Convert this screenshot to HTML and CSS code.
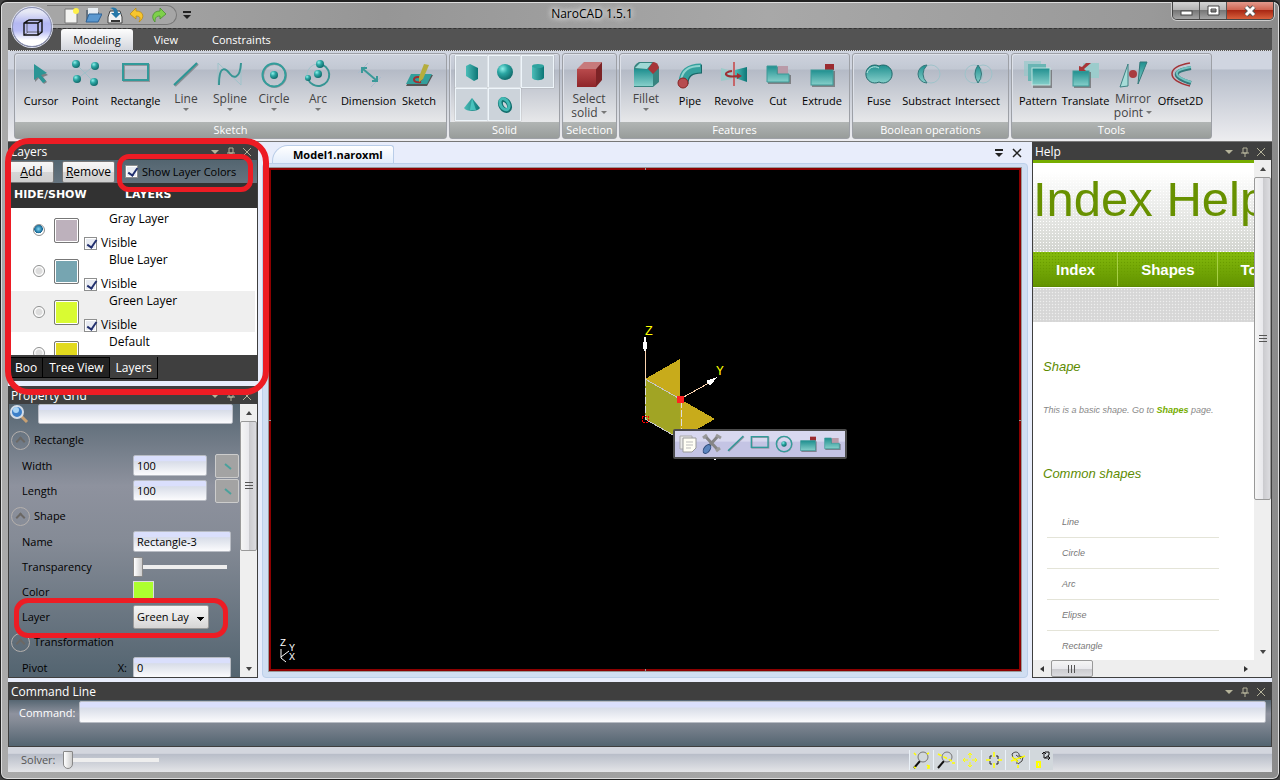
FILE: index.html
```html
<!DOCTYPE html>
<html lang="en">

<head>
    <meta charset="UTF-8">
    <meta name="viewport" content="width=device-width, initial-scale=1.0">
    <title>NaroCAD 1.5.1</title>
    <link rel="stylesheet" href="styles.css">
</head>

<body>
    <!-- shared icons -->
    <svg class="defs" width="0" height="0" aria-hidden="true">
        <defs>
            <linearGradient id="teal" x1="0" y1="0" x2="0" y2="1">
                <stop offset="0" stop-color="#1f8f8f" />
                <stop offset="1" stop-color="#86cfca" />
            </linearGradient>
            <linearGradient id="tealSide" x1="0" y1="0" x2="1" y2="0">
                <stop offset="0" stop-color="#4bbdb8" />
                <stop offset="1" stop-color="#0c7676" />
            </linearGradient>
            <radialGradient id="ball" cx="0.35" cy="0.3" r="0.8">
                <stop offset="0" stop-color="#8ff0ea" />
                <stop offset="0.4" stop-color="#2ba6a3" />
                <stop offset="1" stop-color="#0b5f60" />
            </radialGradient>
            <linearGradient id="red" x1="0" y1="0" x2="0" y2="1">
                <stop offset="0" stop-color="#b94a4c" />
                <stop offset="1" stop-color="#8e2529" />
            </linearGradient>
        </defs>
        <symbol id="i-line" viewBox="0 0 30 30"><path d="M4 26 27 4" stroke="#555" stroke-opacity=".5" stroke-width="2" /><path d="M3 25 26 3" stroke="#2b9695" stroke-width="2" /></symbol>
        <symbol id="i-rect" viewBox="0 0 30 30"><rect x="3" y="5" width="25" height="16" fill="none" stroke="#666" stroke-opacity=".5" stroke-width="2" /><rect x="2" y="4" width="25" height="16" fill="none" stroke="#329a9a" stroke-width="2" /></symbol>
        <symbol id="i-circle" viewBox="0 0 30 30"><circle cx="15.500" cy="15.500" r="11.500" fill="none" stroke="#666" stroke-opacity=".5" stroke-width="2" /><circle cx="15" cy="15" r="11.500" fill="none" stroke="#339d9b" stroke-width="2" /><circle cx="15" cy="15" r="4" fill="url(#ball)" /></symbol>
        <symbol id="i-extrude" viewBox="0 0 30 30"><path d="M5 11H28V27H5z" fill="#555" opacity=".6" /><rect x="18" y="4" width="9" height="6" fill="#9b2b30" /><rect x="4" y="10" width="22" height="15" fill="url(#teal)" stroke="#3c9a98" /></symbol>
        <symbol id="i-cut" viewBox="0 0 30 30"><path d="M5 7H15V15H28V24H5z" fill="#555" opacity=".6" /><rect x="15" y="6" width="10" height="8" fill="#b99aa8" /><path d="M4 6H14V14H26V22H4z" fill="url(#teal)" stroke="#3c9a98" /></symbol>
        <symbol id="i-menu" viewBox="0 0 10 10"><path d="M1 3H9L5 7z" fill="#b5b39a" /></symbol>
        <symbol id="i-pin" viewBox="0 0 10 10"><path d="M3 1H7V6H3zM1 6H9M5 6V10" fill="none" stroke="#b5b39a" /></symbol>
        <symbol id="i-close" viewBox="0 0 10 10"><path d="M1 1 9 9M9 1 1 9" fill="none" stroke="#b5b39a" /></symbol>
    </svg>

    <div class="window">
        <header class="titlebar">
            <button class="orb" aria-label="Application menu">
                <svg width="40" height="40" viewBox="0 0 40 40"><path d="M14 12V24H29M11 27 15 24" fill="none" stroke="#667" /><path d="M11 15 16 12H29V24L25 27H11zM11 15H25V27M25 15 29 12" fill="none" stroke="#111" stroke-width="1.400" /></svg>
            </button>
            <div class="quick">
                <button aria-label="New"><svg width="18" height="18"><path d="M3 3H15V17H3z" fill="#f3f3f1" stroke="#777" /><circle cx="14" cy="5" r="3" fill="#fff14a" /></svg></button>
                <button aria-label="Open"><svg width="18" height="18"><path d="M2 4H8L9 6H15V15H2z" fill="#66727e" /><path d="M4 2H14V9H4z" fill="#e7edf2" /><path d="M5 8H18L14 16H2z" fill="#5b98cf" stroke="#2e6296" /></svg></button>
                <button aria-label="Save"><svg width="18" height="18"><path d="M2 11 4 5H14L16 11V17H2z" fill="#f2f2f2" stroke="#444" /><path d="M5 15H14" stroke="#333" stroke-width="2" /><path d="M4 2C10 0 12 4 12 7H15L10 12 5 7H8C8 4 7 3 4 2z" fill="#2778a8" /></svg></button>
                <button aria-label="Undo"><svg width="18" height="18"><path d="M2 8 8 2V5C16 5 17 12 11 16 13 12 12 10 8 10V13z" fill="#f7c52d" stroke="#b8860b" stroke-width=".7" /></svg></button>
                <button aria-label="Redo"><svg width="18" height="18"><path d="M16 8 10 2V5C2 5 1 12 5 16 5 12 6 10 10 10V13z" fill="#7ed04a" stroke="#3f8a26" stroke-width=".7" /></svg></button>
            </div>
            <button class="quick-more" aria-label="Customize"><svg width="10" height="10"><path d="M1 2H9" stroke="#222" stroke-width="2" /><path d="M1 5H9L5 9z" fill="#222" /></svg></button>
            <h1>NaroCAD 1.5.1</h1>
            <div class="win-buttons">
                <button aria-label="Minimize"><svg width="14" height="12"><rect x="2" y="6" width="11" height="4" fill="#fff" stroke="#444" /></svg></button>
                <button aria-label="Maximize"><svg width="14" height="12"><path d="M2 1H13V10H2zM5 4V7H10V4z" fill="#fff" fill-rule="evenodd" stroke="#444" /></svg></button>
                <button class="win-close" aria-label="Close"><svg width="14" height="12"><path d="M3 2 11 10M11 2 3 10" stroke="#555" stroke-width="5" /><path d="M3 2 11 10M11 2 3 10" stroke="#fff" stroke-width="3" /></svg></button>
            </div>
        </header>

        <div class="app">
            <nav class="tabs">
                <button class="tab active">Modeling</button>
                <button class="tab">View</button>
                <button class="tab">Constraints</button>
            </nav>

            <div class="ribbon">
                <section class="group">
                    <div class="tools">
                        <button class="tool"><svg width="30" height="30"><path d="M9 6V22L13 18 18 24 21 22 17 17 22 15z" fill="#555" opacity=".6" /><path d="M8 4V20L12 17 17 23 20 21 15 15 21 13z" fill="#2b9595" /></svg>Cursor</button>
                        <button class="tool"><svg width="30" height="30"><path d="M6 4 24 22M24 6 7 19" stroke="#9fbfc8" /><circle cx="6" cy="4" r="4" fill="url(#ball)" /><circle cx="25" cy="6" r="4" fill="url(#ball)" /><circle cx="7" cy="19" r="4" fill="url(#ball)" /><circle cx="24" cy="22" r="4" fill="url(#ball)" /></svg>Point</button>
                        <button class="tool tool-l"><svg width="30" height="30"><use href="#i-rect" /></svg>Rectangle</button>
                        <button class="tool drop"><svg width="30" height="30"><use href="#i-line" /></svg>Line</button>
                        <button class="tool drop"><svg width="30" height="30"><path d="M3 25V3L26 25V3" fill="none" stroke="#9fc3ca" /><path d="M4 25C4 2 12 10 15 14S25 20 26 3" fill="none" stroke="#379594" stroke-width="2" /></svg>Spline</button>
                        <button class="tool drop"><svg width="30" height="30"><use href="#i-circle" /></svg>Circle</button>
                        <button class="tool drop"><svg width="30" height="30"><circle cx="15" cy="15" r="11" fill="none" stroke="#9fc3ca" /><path d="M16 4A11 11 0 1 1 5 19" fill="none" stroke="#379594" stroke-width="2" /><circle cx="15" cy="14" r="4" fill="url(#ball)" /><circle cx="17" cy="4" r="4" fill="url(#ball)" /><circle cx="5" cy="18" r="3" fill="url(#ball)" /></svg>Arc</button>
                        <button class="tool tool-l"><svg width="30" height="30"><path d="M4 13 14 3M17 27 27 17" stroke="#abc" /><path d="M9 9 22 20M8 13V8H13M23 16V21H18" fill="none" stroke="#3a9999" stroke-width="2" /></svg>Dimension</button>
                        <button class="tool"><svg width="30" height="30"><path d="M8 15H29L23 26H2z" fill="#555" /><path d="M7 14H28L23 24H2z" fill="#339f9c" /><path d="M17 22C8 24 8 16 15 17L18 20" fill="none" stroke="#a22e32" stroke-width="2" /><path d="M20 4 25 5 19 19 15 22 15 17z" fill="#b5ad3d" /></svg>Sketch</button>
                    </div>
                    <h2>Sketch</h2>
                </section>
                <section class="group">
                    <div class="solids">
                        <button aria-label="Box"><svg width="24" height="24"><path d="M6 6 10 4 18 8V19L14 21 6 16z" fill="url(#tealSide)" /></svg></button>
                        <button aria-label="Sphere"><svg width="24" height="24"><circle cx="12" cy="12" r="8" fill="url(#ball)" /></svg></button>
                        <button aria-label="Cylinder"><svg width="24" height="24"><path d="M6 6V18C8 21 16 21 18 18V6z" fill="url(#tealSide)" /><ellipse cx="12" cy="6" rx="6" ry="2" fill="#2fa39f" /></svg></button>
                        <button aria-label="Cone"><svg width="24" height="24"><path d="M12 5 20 15C18 19 6 19 4 15z" fill="url(#tealSide)" /><path d="M12 5 16 17H10z" fill="#5ee0d8" opacity=".6" /></svg></button>
                        <button aria-label="Torus"><svg width="24" height="24"><ellipse cx="12" cy="12" rx="4" ry="6" fill="none" stroke="#14706f" stroke-width="5" transform="rotate(-30 12 12)" /><ellipse cx="12" cy="11" rx="4" ry="6" fill="none" stroke="#43b9b4" stroke-width="3" transform="rotate(-30 12 12)" /></svg></button>
                    </div>
                    <h2>Solid</h2>
                </section>
                <section class="group">
                    <div class="tools">
                        <button class="tool two"><svg width="30" height="30"><path d="M3 9 10 2H28L22 9z" fill="#c77a7b" /><path d="M22 9 28 2V20L22 27z" fill="#7c2326" /><path d="M3 9H22V27H3z" fill="url(#red)" /></svg><span>Select<br>solid <i class="caret"></i></span></button>
                    </div>
                    <h2>Selection</h2>
                </section>
                <section class="group">
                    <div class="tools">
                        <button class="tool drop"><svg width="30" height="30"><path d="M3 8Q3 5 8 2H22Q28 4 28 9V22L22 27H3z" fill="#37847f" /><path d="M3 9H17Q22 12 22 15V26H3z" fill="url(#teal)" /><path d="M4 8 9 3H21L16 9z" fill="#9fd9d5" /><path d="M17 9 22 2Q27 2 28 8L22 14z" fill="#a73539" /></svg>Fillet</button>
                        <button class="tool"><svg width="30" height="30"><path d="M9 24Q9 9 27 9" fill="none" stroke="#1b6667" stroke-width="9" /><path d="M8 23Q8 8 26 8" fill="none" stroke="#35a09d" stroke-width="9" /><path d="M6 20Q8 6 25 6" fill="none" stroke="#8fd3cf" stroke-width="2" /><circle cx="8" cy="23" r="5" fill="#b74c50" stroke="#822" /></svg>Pipe</button>
                        <button class="tool"><svg width="30" height="30"><path d="M2 8 13 11V19L2 21z" fill="#9bcac9" /><path d="M16 10 28 7V22L16 18z" fill="url(#tealSide)" /><path d="M15 2V26" stroke="#c66569" stroke-width="2" /><path d="M13 11C4 12 4 18 20 16" fill="none" stroke="#9e3033" stroke-width="2" /><path d="M18 13 23 16 18 19z" fill="#9e3033" /></svg>Revolve</button>
                        <button class="tool"><svg width="30" height="30"><use href="#i-cut" /></svg>Cut</button>
                        <button class="tool"><svg width="30" height="30"><use href="#i-extrude" /></svg>Extrude</button>
                    </div>
                    <h2>Features</h2>
                </section>
                <section class="group">
                    <div class="tools">
                        <button class="tool"><svg width="30" height="30"><path d="M15 6A9 9 0 1 0 15 22 9 9 0 1 0 15 6z" fill="url(#teal)" stroke="#22686a" /><path d="M15 8A8 8 0 0 0 3 13" fill="none" stroke="#bfe8e4" /></svg>Fuse</button>
                        <button class="tool tool-m"><svg width="30" height="30"><circle cx="19" cy="14" r="9" fill="none" stroke="#9fc3ca" /><path d="M15 5A9 9 0 1 0 15 23Q7 14 15 5z" fill="url(#teal)" stroke="#35777a" /></svg>Substract</button>
                        <button class="tool tool-m"><svg width="30" height="30"><circle cx="11" cy="14" r="9" fill="none" stroke="#9fc3ca" /><circle cx="20" cy="14" r="9" fill="none" stroke="#9fc3ca" /><path d="M15 5Q22 14 15 23 9 14 15 5z" fill="url(#teal)" stroke="#35777a" /></svg>Intersect</button>
                    </div>
                    <h2>Boolean operations</h2>
                </section>
                <section class="group">
                    <div class="tools">
                        <button class="tool"><svg width="30" height="30"><rect x="1" y="1" width="17" height="15" fill="#8fc8c8" opacity=".6" /><rect x="5" y="4" width="18" height="17" fill="#69b5b4" /><rect x="10" y="10" width="19" height="18" fill="#555" opacity=".6" /><rect x="9" y="8" width="18" height="17" fill="url(#teal)" stroke="#bfe4e0" /></svg>Pattern</button>
                        <button class="tool tool-m"><svg width="30" height="30"><rect x="12" y="3" width="16" height="15" fill="#9ccccc" /><rect x="3" y="12" width="17" height="16" fill="#555" opacity=".6" /><rect x="2" y="11" width="16" height="15" fill="url(#teal)" stroke="#3c9a98" /><path d="M20 3H15L11 7 8 6V11H15L13 9z" fill="#a83639" /></svg>Translate</button>
                        <button class="tool two"><svg width="30" height="30"><path d="M2 27 10 4V26z" fill="#a7dcd8" stroke="#3e8283" /><path d="M20 24 29 2H22z" fill="url(#teal)" stroke="#33797a" /><circle cx="15" cy="14" r="4" fill="#a93c40" /></svg><span>Mirror<br>point <i class="caret"></i></span></button>
                        <button class="tool tool-m"><svg width="30" height="30"><path d="M24 3C0 7 0 20 24 26" fill="none" stroke="#a33438" stroke-width="1.500" /><path d="M25 8C6 11 6 17 25 23" fill="none" stroke="#33787b" stroke-width="4" /><path d="M25 7C6 10 6 16 25 22" fill="none" stroke="#72c4c1" stroke-width="2" /></svg>Offset2D</button>
                    </div>
                    <h2>Tools</h2>
                </section>
            </div>

            <main class="workspace">
                <aside class="left">
                    <section class="panel layers">
                        <header class="panel-title"><h2>Layers</h2>
                            <button aria-label="Menu"><svg width="10" height="10"><use href="#i-menu" /></svg></button>
                            <button aria-label="Pin"><svg width="10" height="10"><use href="#i-pin" /></svg></button>
                            <button aria-label="Close"><svg width="10" height="10"><use href="#i-close" /></svg></button>
                        </header>
                        <div class="layer-bar">
                            <button class="btn"><u>A</u>dd</button>
                            <button class="btn btn-wide"><u>R</u>emove</button>
                            <label class="show-colors mark mark-colors"><input type="checkbox" checked>Show Layer Colors</label>
                        </div>
                        <div class="layer-head"><b>HIDE/SHOW</b><b>LAYERS</b></div>
                        <ul class="layer-list">
                            <li>
                                <input type="radio" name="layer" aria-label="Gray Layer" checked>
                                <button class="swatch gray" aria-label="Gray Layer color"></button>
                                <div><p>Gray Layer</p><label><input type="checkbox" checked>Visible</label></div>
                            </li>
                            <li>
                                <input type="radio" name="layer" aria-label="Blue Layer">
                                <button class="swatch blue" aria-label="Blue Layer color"></button>
                                <div><p>Blue Layer</p><label><input type="checkbox" checked>Visible</label></div>
                            </li>
                            <li class="current">
                                <input type="radio" name="layer" aria-label="Green Layer">
                                <button class="swatch green" aria-label="Green Layer color"></button>
                                <div><p>Green Layer</p><label><input type="checkbox" checked>Visible</label></div>
                            </li>
                            <li>
                                <input type="radio" name="layer" aria-label="Default">
                                <button class="swatch yellow" aria-label="Default color"></button>
                                <div><p>Default</p></div>
                            </li>
                        </ul>
                        <div class="dock-tabs">
                            <button>Boo</button>
                            <button>Tree View</button>
                            <button class="active">Layers</button>
                        </div>
                    </section>

                    <section class="panel props">
                        <header class="panel-title"><h2>Property Grid</h2>
                            <button aria-label="Menu"><svg width="10" height="10"><use href="#i-menu" /></svg></button>
                            <button aria-label="Pin"><svg width="10" height="10"><use href="#i-pin" /></svg></button>
                            <button aria-label="Close"><svg width="10" height="10"><use href="#i-close" /></svg></button>
                        </header>
                        <div class="props-body">
                            <form class="grid">
                                <div class="search">
                                    <svg width="22" height="20"><path d="M12 12 18 18" stroke="#c9a173" stroke-width="3" /><circle cx="8" cy="8" r="6" fill="#3b7fc9" stroke="#d4dde8" stroke-width="2" /><circle cx="7" cy="6" r="3" fill="#a9d4f5" /></svg>
                                    <input type="text" class="field" aria-label="Search">
                                </div>
                                <div class="section"><button type="button" class="fold" aria-label="Collapse"></button>Rectangle</div>
                                <div class="row"><label for="width">Width</label><input id="width" class="field short" type="text" value="100">
                                    <button type="button" class="pick" aria-label="Pick width"><svg width="20" height="20"><path d="M9 8 15 13" stroke="#4aa19c" stroke-width="2" /></svg></button></div>
                                <div class="row"><label for="length">Length</label><input id="length" class="field short" type="text" value="100">
                                    <button type="button" class="pick" aria-label="Pick length"><svg width="20" height="20"><path d="M9 8 15 13" stroke="#4aa19c" stroke-width="2" /></svg></button></div>
                                <div class="section"><button type="button" class="fold" aria-label="Collapse"></button>Shape</div>
                                <div class="row"><label for="name">Name</label><input id="name" class="field" type="text" value="Rectangle-3"></div>
                                <div class="row"><label for="transparency">Transparency</label><input id="transparency" type="range" value="0"></div>
                                <div class="row"><label for="color">Color</label><button type="button" id="color" class="color"></button></div>
                                <div class="row mark mark-layer"><label for="layer">Layer</label>
                                    <select id="layer"><option>Green Lay</option></select></div>
                                <div class="section"><button type="button" class="fold" aria-label="Collapse"></button>Transformation</div>
                                <div class="row"><label for="pivot">Pivot <span>X:</span></label><input id="pivot" class="field" type="text" value="0"></div>
                            </form>
                            <div class="vbar"><button class="up" aria-label="Scroll up"></button><div class="thumb short-thumb"></div><button class="down" aria-label="Scroll down"></button></div>
                        </div>
                    </section>
                </aside>

                <section class="document">
                    <div class="doc-tabs">
                        <button class="doc-tab">Model1.naroxml</button>
                        <button class="doc-btn" aria-label="Documents"><svg width="10" height="10"><path d="M1 2H9" stroke="#222" stroke-width="2" /><path d="M1 5H9L5 9z" fill="#222" /></svg></button>
                        <button class="doc-btn" aria-label="Close document"><svg width="10" height="10"><path d="M1 1 9 9M9 1 1 9" stroke="#222" stroke-width="1.500" /></svg></button>
                    </div>
                    <div class="doc-frame">
                        <div class="canvas">
                            <svg class="scene" width="160" height="200" viewBox="0 0 160 200" shape-rendering="crispEdges">
                                <path d="M40 60 75 40V80zM75 80 110 100 75 120z" fill="#c8ab1b" />
                                <path d="M40 60 75 80V120L40 100z" fill="#a1a424" />
                                <path d="M40 60 75 80M40 100 75 120" stroke="#c8c8c8" />
                                <path d="M40 60V100M76 82V120" stroke="#ddd" stroke-dasharray="7 2" />
                                <path d="M40 60V30M75 80 104 64" stroke="#fbd3ae" />
                                <path d="M40 18 42 28 40 32 38 28zM111 59 105 66 102 62z" fill="#fff" stroke="#fff" />
                                <path d="M37 97h6v6h-6z" fill="none" stroke="#f00" stroke-dasharray="2 1" />
                                <path d="M72 77h7v7h-7z" fill="#f22" />
                                <path d="M107 139 111 141" stroke="#fff" />
                                <text x="40" y="16">Z</text>
                                <text x="111" y="56">Y</text>
                            </svg>
                            <svg class="axes" width="30" height="30" viewBox="0 0 30 30">
                                <path d="M4 12V21L9 25M4 20 12 14" fill="none" stroke="#fff" />
                                <text x="3" y="9">Z</text><text x="12" y="14">Y</text><text x="12" y="23">X</text>
                            </svg>
                            <i class="tick top"></i><i class="tick bottom"></i><i class="tick left-tick"></i><i class="tick right-tick"></i>
                            <div class="float-bar">
                                <button aria-label="Copy"><svg width="22" height="22"><path d="M3 3H15V16H3z" fill="#e8e8e8" stroke="#aaa" /><path d="M6 5H19V15L15 19H6z" fill="#fffef4" stroke="#999" /><path d="M9 9H16M9 12H16M9 15H14" stroke="#bbb" /></svg></button>
                                <button aria-label="Settings"><svg width="22" height="22"><path d="M4 3 17 17M17 3 8 13" stroke="#858585" stroke-width="3" /><path d="M2 5 6 2M15 2 20 5M15 18 19 15" stroke="#999" stroke-width="3" /><ellipse cx="6" cy="16" rx="3" ry="5" fill="#5b84bd" stroke="#2c4a7a" transform="rotate(35 6 16)" /></svg></button>
                                <button aria-label="Line"><svg width="20" height="20"><use href="#i-line" /></svg></button>
                                <button aria-label="Rectangle"><svg width="20" height="20"><use href="#i-rect" /></svg></button>
                                <button aria-label="Circle"><svg width="20" height="20"><use href="#i-circle" /></svg></button>
                                <button aria-label="Extrude"><svg width="20" height="20"><use href="#i-extrude" /></svg></button>
                                <button aria-label="Cut"><svg width="20" height="20"><use href="#i-cut" /></svg></button>
                            </div>
                        </div>
                    </div>
                </section>

                <aside class="panel help">
                    <header class="panel-title"><h2>Help</h2>
                        <button aria-label="Menu"><svg width="10" height="10"><use href="#i-menu" /></svg></button>
                        <button aria-label="Pin"><svg width="10" height="10"><use href="#i-pin" /></svg></button>
                        <button aria-label="Close"><svg width="10" height="10"><use href="#i-close" /></svg></button>
                    </header>
                    <div class="help-body">
                        <article class="page">
                            <h1>Index Help</h1>
                            <nav><a href="#">Index</a><a href="#">Shapes</a><a href="#">Tools</a></nav>
                            <div class="band"></div>
                            <h3>Shape</h3>
                            <p>This is a basic shape. Go to <a href="#">Shapes</a> page.</p>
                            <h3>Common shapes</h3>
                            <ul><li>Line</li><li>Circle</li><li>Arc</li><li>Elipse</li><li>Rectangle</li></ul>
                        </article>
                        <div class="vbar"><button class="up" aria-label="Scroll up"></button><div class="thumb"></div><button class="down" aria-label="Scroll down"></button></div>
                        <div class="hbar"><button class="prev" aria-label="Scroll left"></button><div class="thumb"></div><button class="next" aria-label="Scroll right"></button></div>
                    </div>
                </aside>
            </main>

            <section class="panel command">
                <header class="panel-title"><h2>Command Line</h2>
                    <button aria-label="Menu"><svg width="10" height="10"><use href="#i-menu" /></svg></button>
                    <button aria-label="Pin"><svg width="10" height="10"><use href="#i-pin" /></svg></button>
                    <button aria-label="Close"><svg width="10" height="10"><use href="#i-close" /></svg></button>
                </header>
                <div class="command-body"><label for="command">Command:</label><input id="command" class="field" type="text"></div>
            </section>

            <footer class="status">
                <label for="solver">Solver:</label><input id="solver" type="range" value="0">
                <div class="view-tools">
                    <button aria-label="Zoom window"><svg width="20" height="20"><path d="M2 18 8 11" stroke="#111" stroke-width="2" /><circle cx="11" cy="7" r="5" fill="none" stroke="#777" /><path d="M2 3 4 5M17 3 15 4M2 17 4 18M15 15 17 17M17 15V18H15" stroke="#ff0" stroke-width="1.500" fill="none" /></svg></button>
                    <button aria-label="Zoom dynamic"><svg width="20" height="20"><path d="M2 18 8 11" stroke="#111" stroke-width="2" /><circle cx="11" cy="7" r="5" fill="none" stroke="#777" /><path d="M2 4 16 11M16 13H19" stroke="#ff0" stroke-width="1.500" stroke-dasharray="4 2" /></svg></button>
                    <button aria-label="Pan"><svg width="20" height="20"><path d="M10 3V8M10 12V17M3 10H8M12 10H17M8 5 10 3 12 5M8 15 10 17 12 15M5 8 3 10 5 12M15 8 17 10 15 12" fill="none" stroke="#ff0" /></svg></button>
                    <button aria-label="Fit all"><svg width="20" height="20"><path d="M8 6H6V9M12 6H14V9M8 14H6V11M12 14H14V11" fill="none" stroke="#222" /><path d="M10 2V7M10 13V18M2 10H6M14 10H18" stroke="#ff0" stroke-width="1.500" /></svg></button>
                    <button aria-label="Rotate"><svg width="20" height="20"><path d="M4 4C8 0 12 3 11 6L15 7 14 11 10 14M4 4 5 8 9 10V14M8 5 13 9" fill="none" stroke="#444" /><path d="M3 11 17 6M4 7 10 12M10 15V18" stroke="#ff0" stroke-width="1.500" /></svg></button>
                    <button aria-label="Axes"><svg width="20" height="20"><path d="M12 2V8H18M10 4 12 2 14 4M17 2H13M17 2V5L13 8M16 6 18 8 16 10" fill="none" stroke="#111" /><rect x="5" y="12" width="3" height="5" fill="none" stroke="#ff0" stroke-width="2" /></svg></button>
                </div>
            </footer>
        </div>
    </div>
</body>

</html>
```

FILE: styles.css
```css
* {
    box-sizing: border-box;
}
body {
    margin: 0;
    font: 11px/16px "Open Sans", "Noto Sans", sans-serif;
    color: #000;
    background: #444;
}
h1, h2, h3, p, ul {
    margin: 0;
    padding: 0;
    font-weight: normal;
    font-size: inherit;
    list-style: none;
}
button {
    padding: 0;
    border: 0;
    background: none;
    font: inherit;
    color: inherit;
}
input {
    margin: 0;
    font: inherit;
}
svg {
    display: block;
    fill: none;
    flex: none;
}
.defs {
    position: absolute;
}
.window {
    display: flex;
    flex-direction: column;
    height: 100vh;
    min-height: 600px;
    overflow: hidden;
    padding: 0 7px 7px;
    border: 1px solid #222;
    border-top-width: 2px;
    border-radius: 7px;
    background: linear-gradient(90deg, #aaa, #969696 30%, #a8a8a8 60%, #999 90%, #8b8b8b);
    box-shadow: inset 0 0 0 1px #ddd;
}

/* title bar */
.titlebar {
    position: relative;
    display: flex;
    align-items: flex-start;
    height: 26px;
    flex: none;
}
.orb {
    position: absolute;
    left: 4px;
    top: 5px;
    z-index: 2;
    width: 40px;
    height: 40px;
    border: 1px solid #8c93b8;
    border-radius: 50%;
    background: linear-gradient(#e6e8f5 10%, #b4b8f2 40%, #b9bdf6 60%, #fff 85%);
    box-shadow: 0 0 0 1px #dfe2f2;
}
.quick {
    display: flex;
    align-items: center;
    gap: 4px;
    width: 130px;
    height: 20px;
    margin: 3px 0 0 39px;
    padding-left: 15px;
    border: 1px solid #777;
    border-left: 0;
    border-radius: 0 10px 10px 0;
    background: #a6a6a6;
}
.quick-more {
    margin: 8px 0 0 5px;
}
.titlebar h1 {
    position: absolute;
    left: 0;
    right: 0;
    top: 4px;
    margin: 0 96px 0 0;
    font-size: 12px;
    text-align: center;
    text-shadow: 0 0 6px #fff, 0 0 6px #fff;
    pointer-events: none;
}
.win-buttons {
    display: flex;
    margin: 0 -2px 0 auto;
    border: 1px solid #444;
    border-top: 0;
    border-radius: 0 0 5px 5px;
    overflow: hidden;
    box-shadow: 0 0 0 1px #ccc;
}
.win-buttons button {
    display: flex;
    justify-content: center;
    align-items: center;
    width: 27px;
    height: 17px;
    border-right: 1px solid #555;
    background: linear-gradient(#d4d4d4, #b0b0b0 50%, #777 50%, #a5a5a5);
}
.win-buttons .win-close {
    width: 46px;
    border: 0;
    background: linear-gradient(#e29a8d, #cd5f4b 50%, #a92814 50%, #d8603c);
}
.app {
    display: flex;
    flex-direction: column;
    flex: 1;
    min-height: 0;
    background: #e8edfb;
}

/* ribbon */
.tabs {
    display: flex;
    align-items: flex-end;
    gap: 2px;
    height: 23px;
    flex: none;
    padding-left: 53px;
    background: #535353;
    border-top: 1px dashed #333;
    border-bottom: 1px dotted #ddd;
}
.tab {
    height: 21px;
    padding: 0 16px;
    color: #fff;
}
.tab.active {
    width: 72px;
    padding: 0;
    margin-right: 3px;
    border-radius: 3px 3px 0 0;
    background: linear-gradient(#fdfdfd, #d3d6dd);
    color: #111;
}
.ribbon {
    display: flex;
    gap: 2px;
    height: 91px;
    flex: none;
    padding: 2px 6px;
    background: linear-gradient(#d0d5e0 20%, #b6bdca 21%, #ededf0);
    border-bottom: 1px solid #777;
}
.group {
    display: flex;
    flex-direction: column;
    height: 86px;
    border: 1px solid #9da0a6;
    border-radius: 3px;
    background: linear-gradient(#cdd2dd, #c2c8d3 18%, #b4bac6 19%, #e6e7e9 80%);
    box-shadow: inset 1px 1px #dde1e9;
}
.group h2 {
    height: 16px;
    margin-top: auto;
    background: linear-gradient(#b1b5b4, #989c9a);
    color: #fff;
    text-align: center;
    line-height: 15px;
}
.tools {
    display: flex;
    padding: 6px 5px 0 4px;
}
.tool {
    display: flex;
    flex-direction: column;
    align-items: center;
    gap: 3px;
    width: 44px;
    white-space: nowrap;
}
.tool-m {
    width: 51px;
}
.tool-l {
    width: 57px;
}
.tool.drop, .tool.two {
    gap: 0;
    color: #444;
    font-size: 12px;
    line-height: 18px;
}
.tool.two span {
    line-height: 14px;
    padding-top: 2px;
}
.drop::after, .caret {
    content: "";
    display: inline-block;
    border: 3px solid transparent;
    border-top-color: #777;
    border-bottom: 0;
}
.caret {
    margin-bottom: 3px;
}
.solids {
    display: grid;
    grid-template-columns: repeat(3, 33px);
    padding: 1px 5px;
}
.solids button {
    display: flex;
    align-items: center;
    justify-content: center;
    height: 33px;
    border: 1px solid #eef5fa;
    background: #ccd3da;
    box-shadow: 0 0 1px #888;
}

/* docked panels */
.workspace {
    display: flex;
    flex: 1;
    min-height: 0;
    gap: 4px;
}
.left {
    display: flex;
    flex-direction: column;
    gap: 5px;
    width: 250px;
    flex: none;
}
.panel {
    display: flex;
    flex-direction: column;
    min-height: 0;
    border: 1px solid #3f3f3f;
    background: #3f3f3f;
}
.panel-title {
    display: flex;
    align-items: center;
    gap: 6px;
    height: 17px;
    flex: none;
    padding: 0 5px 0 2px;
    color: #fff;
}
.panel-title h2 {
    margin-right: auto;
    font-size: 12px;
}
.layers {
    position: relative;
    height: 239px;
    flex: none;
}
/* red highlights */
.layers::after, .mark::after {
    content: "";
    position: absolute;
    z-index: 5;
    border: 6px solid #ed1c24;
    pointer-events: none;
}
.layers::after {
    inset: -5px -12px -15px -4px;
    border-radius: 24px;
}
.mark {
    position: relative;
}
.mark-colors::after {
    inset: -7px -17px -9px -8px;
    border-width: 5px;
    border-radius: 12px;
}
.mark-layer::after {
    inset: -6px 12px -9px 5px;
    border-width: 5px;
    border-radius: 14px;
}
.layer-bar {
    display: flex;
    align-items: center;
    height: 23px;
    flex: none;
    background: linear-gradient(#536570, #66747f);
}
.btn {
    width: 45px;
    height: 22px;
    margin-right: 8px;
    border: 1px solid #777;
    border-radius: 2px;
    background: linear-gradient(#f7f7f7, #ebebeb 50%, #d6d6d6 50%, #cfcfcf);
    font-size: 12px;
}
.btn-wide {
    width: 53px;
    margin-right: 10px;
}
.show-colors {
    display: flex;
    align-items: center;
    gap: 4px;
    height: 22px;
}
input[type="checkbox"] {
    appearance: none;
    width: 13px;
    height: 13px;
    flex: none;
    border: 1px solid #8e8f8f;
    background: #e8ebf2;
    box-shadow: inset 0 0 0 1px #fff;
}
input[type="checkbox"]:checked::after {
    content: "";
    display: block;
    width: 4px;
    height: 8px;
    margin: 0 0 0 4px;
    border: solid #22306e;
    border-width: 0 2px 2px 0;
    transform: rotate(35deg);
}
input[type="radio"] {
    appearance: none;
    width: 12px;
    height: 12px;
    flex: none;
    border: 1px solid #8e8f8f;
    border-radius: 50%;
    background: radial-gradient(#ddd 40%, #fff 60%);
}
input[type="radio"]:checked {
    background: radial-gradient(circle at 45% 40%, #7fd7f5, #146795 50%, #fff 56%);
}
.layer-head {
    display: grid;
    grid-template-columns: 111px 1fr;
    height: 25px;
    flex: none;
    padding: 4px 5px;
    background: #323232;
    color: #fff;
    font: bold 11px/16px "DejaVu Sans", sans-serif;
}
.layer-list {
    flex: 1;
    overflow: hidden;
    padding: 1px 2px 0;
    background: #fff;
    font-size: 12px;
}
.layer-list li {
    display: flex;
    align-items: center;
    height: 41px;
    padding-left: 22px;
}
.layer-list .current {
    background: #efefef;
}
.layer-list div {
    min-height: 45px;
    margin-left: 5px;
    padding-top: 4px;
}
.layer-list p {
    height: 23px;
    margin-left: 25px;
}
.layer-list label {
    display: flex;
    align-items: center;
    gap: 4px;
    line-height: 18px;
}
.swatch {
    width: 25px;
    height: 25px;
    margin: 1px 0 0 9px;
    border: 1px solid #777;
    border-radius: 2px;
    box-shadow: inset 0 0 0 1px #fff;
}
.gray {
    background: #bdb1bc;
}
.blue {
    background: #76a5b1;
}
.green {
    background: #d9fb32;
}
.yellow {
    background: #e2da1e;
}
.dock-tabs {
    display: flex;
    height: 25px;
    flex: none;
    padding-top: 2px;
    color: #fff;
    font-size: 12px;
}
.dock-tabs button {
    height: 21px;
    padding: 0 5px 0 6px;
    border: 1px solid #000;
    border-left: 0;
    background: #222;
}
.dock-tabs .active {
    height: 22px;
    border-top: 0;
    background: #3f3f3f;
}

/* property grid */
.props {
    flex: 1;
}
.props-body {
    display: flex;
    flex: 1;
    min-height: 0;
}
.grid {
    flex: 1;
    overflow: hidden;
    background: linear-gradient(#566672, #8e929e 30%, #858b96 50%, #536470);
}
.search {
    display: flex;
    height: 23px;
    align-items: flex-start;
}
.search svg {
    margin-right: 7px;
}
.field {
    width: 98px;
    height: 21px;
    padding: 0 3px;
    border: 1px solid #b8bcc4;
    border-radius: 2px;
    background: linear-gradient(#dadffc 25%, #d8dde8 30%, #fbfbfd);
}
.search .field {
    width: 195px;
    height: 20px;
}
.section {
    display: flex;
    align-items: center;
    gap: 4px;
    height: 26px;
    padding-left: 2px;
}
.fold {
    display: flex;
    align-items: center;
    justify-content: center;
    width: 19px;
    height: 19px;
    border: 1px solid #b5b0ad;
    border-radius: 50%;
}
.fold::after {
    content: "";
    width: 5px;
    height: 5px;
    margin-top: 3px;
    border: solid #6b6864;
    border-width: 2px 0 0 2px;
    transform: rotate(45deg);
}
.row {
    display: flex;
    align-items: center;
    height: 25px;
    padding-left: 13px;
}
.row label {
    display: flex;
    justify-content: space-between;
    width: 111px;
    padding-right: 6px;
}
.short {
    width: 74px;
}
.pick {
    width: 24px;
    height: 24px;
    margin-left: 8px;
    border: 1px solid #ccc;
    border-radius: 2px;
    background: #a3a3a3;
}
input[type="range"] {
    appearance: none;
    width: 94px;
    height: 20px;
    background: linear-gradient(#eee, #eee) center / 100% 4px no-repeat;
}
input[type="range"]::-webkit-slider-thumb {
    appearance: none;
    width: 10px;
    height: 20px;
    border: 1px solid #888;
    border-radius: 1px;
    background: linear-gradient(90deg, #fff, #ccc);
}
.color {
    width: 21px;
    height: 21px;
    border: 1px solid #ddd;
    background: #adff2f;
}
select {
    appearance: none;
    width: 76px;
    height: 24px;
    padding: 0 3px;
    border: 1px solid #999;
    border-radius: 2px;
    background: linear-gradient(225deg, #000 50%, transparent 50%) 63px 11px / 4px 4px no-repeat, linear-gradient(135deg, #000 50%, transparent 50%) 67px 11px / 4px 4px no-repeat, linear-gradient(#f5f5f5, #e8e8e8 50%, #d5d5d5);
    font: inherit;
}

/* scroll bars */
.vbar {
    display: flex;
    flex-direction: column;
    width: 17px;
    flex: none;
    background: #efefef;
}
.vbar button, .hbar button {
    display: flex;
    align-items: center;
    justify-content: center;
    width: 17px;
    height: 17px;
    flex: none;
}
.vbar button::after, .hbar button::after {
    content: "";
    border: 3px solid transparent;
}
.vbar .up::after {
    border-top: 0;
    border-bottom: 4px solid #444;
}
.vbar .down::after {
    border-bottom: 0;
    border-top: 4px solid #444;
}
.hbar .prev::after {
    border-left: 0;
    border-right: 4px solid #333;
}
.hbar .next::after {
    border-right: 0;
    border-left: 4px solid #333;
}
.thumb {
    display: flex;
    align-items: center;
    justify-content: center;
    border: 1px solid #999;
    border-radius: 2px;
    background: linear-gradient(90deg, #f5f5f5, #e9e9ed 50%, #cbcbcf 55%, #dcdce0);
}
.thumb::after {
    content: "";
    width: 8px;
    height: 8px;
    background: repeating-linear-gradient(#555 0 1px, transparent 1px 3px);
}
.vbar .thumb {
    height: 323px;
    margin-bottom: auto;
}
.vbar .short-thumb {
    height: 130px;
}

/* document */
.document {
    display: flex;
    flex-direction: column;
    flex: 1;
    min-width: 0;
}
.doc-tabs {
    display: flex;
    align-items: center;
    gap: 8px;
    height: 21px;
    padding-right: 6px;
}
.doc-tab {
    align-self: flex-end;
    height: 18px;
    margin: 0 auto 0 10px;
    padding: 0 10px 0 20px;
    border: 1px solid #b9cde8;
    border-bottom: 0;
    border-radius: 16px 3px 0 0;
    background: linear-gradient(#fff, #e3edfb);
    font-weight: bold;
}
.doc-frame {
    display: flex;
    flex: 1;
    min-height: 0;
    padding: 4px 6px 6px;
    border: 1px solid #bccfe9;
    border-radius: 4px;
    background: #d0def2;
}
.canvas {
    position: relative;
    flex: 1;
    border: 2px solid #8c0000;
    outline: 1px solid #999;
    background: #000;
}
.scene {
    position: absolute;
    left: calc(50% - 40px);
    top: calc(50% - 101px);
}
.scene text {
    fill: #ff0;
    font: 13px "Liberation Mono", monospace;
}
.axes {
    position: absolute;
    left: 6px;
    bottom: 2px;
}
.axes text {
    fill: #fff;
    font: 10px "Liberation Mono", monospace;
}
.tick {
    position: absolute;
    background: #999;
}
.top, .bottom {
    left: 50%;
    width: 1px;
    height: 3px;
}
.top {
    top: -3px;
}
.bottom {
    bottom: -3px;
}
.left-tick, .right-tick {
    top: 50%;
    width: 3px;
    height: 1px;
}
.left-tick {
    left: -3px;
}
.right-tick {
    right: -3px;
}
.float-bar {
    position: absolute;
    left: calc(50% + 28px);
    top: calc(50% + 9px);
    display: flex;
    gap: 2px;
    padding: 2px;
    border: 2px solid #4c4c4c;
    border-radius: 2px;
    background: linear-gradient(#d8d8ef 40%, #c4c4e4 41%);
}
.float-bar button {
    display: flex;
    align-items: center;
    justify-content: center;
    width: 22px;
    height: 22px;
}

/* help */
.help {
    width: 240px;
    flex: none;
}
.help-body {
    display: grid;
    grid-template-columns: 1fr 17px;
    grid-template-rows: 1fr 17px;
    flex: 1;
    min-height: 0;
    background: #eee;
}
.page {
    overflow: hidden;
    background: #fff;
    font-family: "Liberation Sans", Arial, sans-serif;
}
.page h1 {
    height: 92px;
    padding-top: 8px;
    border-top: 3px solid #76ad00;
    background: radial-gradient(#fff 30%, transparent 40%) 0 0 / 3px 3px, linear-gradient(#fff 10%, #d2d4cf);
    color: #689100;
    font-size: 49px;
    line-height: 56px;
    white-space: nowrap;
}
.page nav {
    display: flex;
    height: 35px;
    border-bottom: 1px solid #5b8a00;
    background: radial-gradient(#6a9c00 20%, transparent 50%) 0 0 / 3px 3px, linear-gradient(#85bb0c, #629300);
}
.page nav a {
    flex: none;
    padding: 0 22px 0 23px;
    border-right: 1px solid #a6cf45;
    color: #fff;
    font-size: 15px;
    font-weight: bold;
    line-height: 36px;
    text-decoration: none;
}
.page .band {
    height: 35px;
    border-top: 1px solid #fff;
    background: radial-gradient(#eee 20%, transparent 50%) 0 0 / 3px 3px, #d6d6d6;
}
.page h3 {
    margin: 35px 10px 0;
    color: #5d8b00;
    font-size: 13px;
    font-style: italic;
    line-height: 20px;
}
.page p {
    margin: 25px 10px 0;
    color: #888;
    font-size: 9px;
    font-style: italic;
    white-space: nowrap;
}
.page p + h3 {
    margin-top: 46px;
}
.page p a {
    color: #76ad00;
    font-weight: bold;
    text-decoration: none;
}
.page ul {
    margin: 23px 35px 0 14px;
}
.page li {
    height: 31px;
    padding-left: 15px;
    border-bottom: 1px solid #e4e4d8;
    color: #777;
    font-size: 9px;
    font-style: italic;
    line-height: 30px;
}
.hbar {
    display: flex;
}
.hbar .thumb {
    width: 42px;
    margin: 0 auto 0 1px;
    background: linear-gradient(#f5f5f5, #e9e9ed 50%, #cbcbcf 55%, #dcdce0);
}
.hbar .thumb::after {
    background: repeating-linear-gradient(90deg, #555 0 1px, transparent 1px 3px);
}

/* command line and status */
.command {
    margin-top: 4px;
    flex: none;
}
.command-body {
    display: flex;
    gap: 4px;
    height: 46px;
    padding: 1px 5px 0 10px;
    background: linear-gradient(#566672, #8e929e 30%, #858b96 45%, #536470);
    color: #fff;
    line-height: 24px;
}
.command-body .field {
    flex: 1;
    height: 22px;
}
.status {
    display: flex;
    align-items: center;
    height: 25px;
    flex: none;
    padding-left: 13px;
    background: linear-gradient(#d3d6de 25%, #b9bec9 30%, #e4e5e8);
    color: #555;
}
.status input {
    width: 96px;
    margin-left: 8px;
}
.status input::-webkit-slider-thumb {
    height: 18px;
    border-radius: 1px 1px 5px 5px;
}
.view-tools {
    display: flex;
    margin: 0 219px 0 auto;
}
.view-tools button {
    display: flex;
    align-items: center;
    justify-content: center;
    width: 24px;
    height: 20px;
    border-left: 1px solid #eaf1f8;
    background: #d2d8dc;
}
```
